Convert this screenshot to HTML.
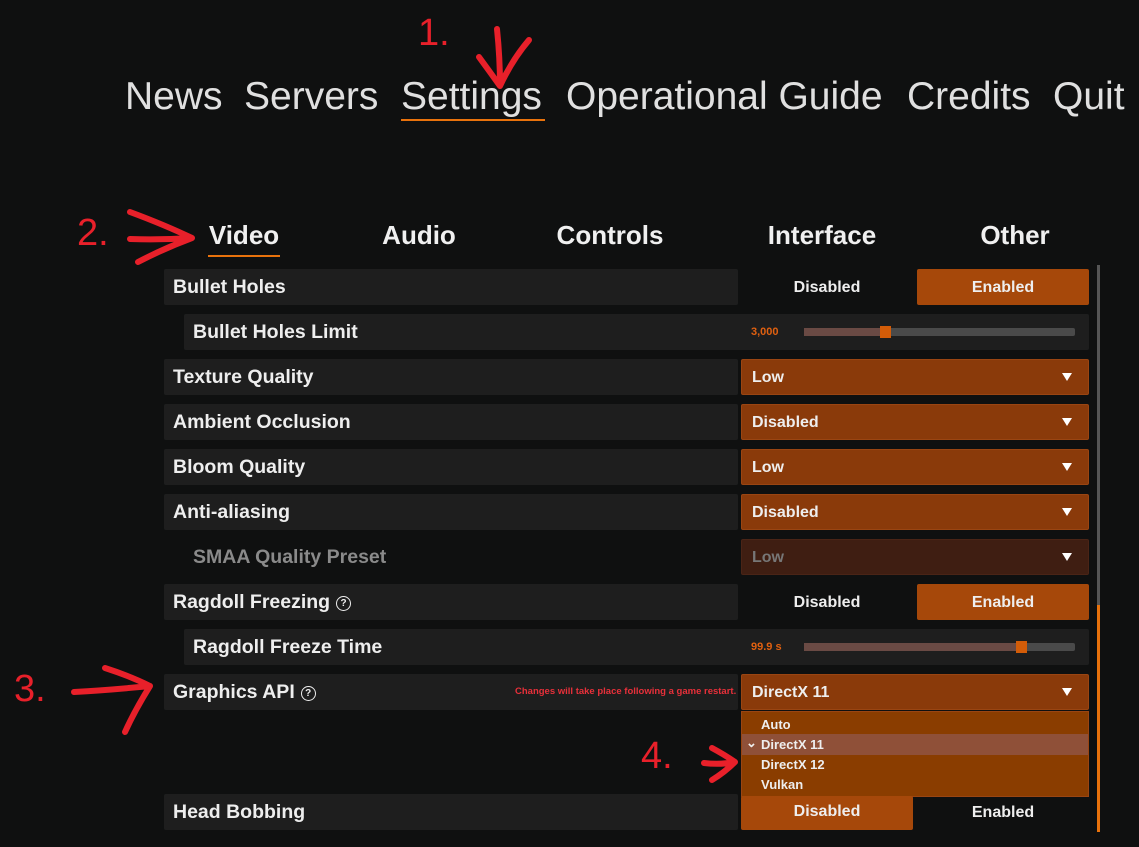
<!DOCTYPE html>
<html><head><meta charset="utf-8"><style>
body{margin:0;width:1139px;height:847px;background:#0f1010;position:relative;overflow:hidden;font-family:"Liberation Sans",sans-serif;}
.a{position:absolute;}
.nav{top:75px;font-size:39px;color:#e0e0e0;}
.tab{top:220px;font-size:26px;font-weight:bold;color:#f0f0f0;transform:translateX(-50%);}
.lb{position:absolute;left:164px;width:574px;height:36px;background:#1e1e1e;border-radius:2px;color:#eee;font-weight:bold;font-size:19.5px;line-height:37px;padding-left:9px;box-sizing:border-box;}
.ind{left:184px;width:905px;padding-left:9px;}
.dd{position:absolute;left:741px;width:348px;height:36px;background:#8a3a0a;border:1px solid #9a4512;box-sizing:border-box;border-radius:2px;color:#eee;font-weight:bold;font-size:16px;line-height:36px;padding-left:10px;}
.dd:after{content:"";position:absolute;right:16px;top:13px;border-left:5px solid transparent;border-right:5px solid transparent;border-top:8px solid #fff;}
.tg{position:absolute;width:172px;height:36px;text-align:center;line-height:37px;font-weight:bold;font-size:16px;color:#eee;}
.on{background:#a6480a;border-radius:2px;}
.q{display:inline-block;width:13px;height:13px;border:1.5px solid #eee;border-radius:50%;font-size:10px;line-height:13px;text-align:center;vertical-align:2px;margin-left:6px;}
.red{color:#e8202a;font-size:38px;}
</style></head><body>
<div class="a nav" style="left:125px">News</div>
<div class="a nav" style="left:244px">Servers</div>
<div class="a nav" style="left:401px">Settings</div>
<div class="a" style="left:401px;top:119px;width:144px;height:2px;background:#e8720c"></div>
<div class="a nav" style="left:566px">Operational Guide</div>
<div class="a nav" style="left:907px">Credits</div>
<div class="a nav" style="left:1053px">Quit</div>

<div class="a tab" style="left:244px">Video</div>
<div class="a" style="left:208px;top:255px;width:72px;height:2px;background:#e8720c"></div>
<div class="a tab" style="left:419px">Audio</div>
<div class="a tab" style="left:610px">Controls</div>
<div class="a tab" style="left:822px">Interface</div>
<div class="a tab" style="left:1015px">Other</div>

<div class="a" style="left:1097px;top:265px;width:3px;height:340px;background:#555"></div>
<div class="a" style="left:1097px;top:605px;width:3px;height:227px;background:#e8720c"></div>

<div class="lb" style="top:269px">Bullet Holes</div>
<div class="tg" style="left:741px;top:269px">Disabled</div>
<div class="tg on" style="left:917px;top:269px">Enabled</div>

<div class="lb ind" style="top:314px">Bullet Holes Limit</div>
<div class="a" style="left:751px;top:326px;font-size:11px;font-weight:bold;color:#e06010">3,000</div>
<div class="a" style="left:804px;top:328px;width:271px;height:8px;background:#4a4a4a;border-radius:2px"></div>
<div class="a" style="left:804px;top:328px;width:80px;height:8px;background:#6a4a44"></div>
<div class="a" style="left:880px;top:326px;width:11px;height:12px;background:#d35c08"></div>

<div class="lb" style="top:359px">Texture Quality</div><div class="dd" style="top:359px">Low</div>
<div class="lb" style="top:404px">Ambient Occlusion</div><div class="dd" style="top:404px">Disabled</div>
<div class="lb" style="top:449px">Bloom Quality</div><div class="dd" style="top:449px">Low</div>
<div class="lb" style="top:494px">Anti-aliasing</div><div class="dd" style="top:494px">Disabled</div>
<div class="lb" style="top:539px;left:184px;background:none;color:#8a8a8a">SMAA Quality Preset</div>
<div class="dd" style="top:539px;background:#3f1e12;border-color:#4a2416;color:#777">Low</div>

<div class="lb" style="top:584px">Ragdoll Freezing<span class="q">?</span></div>
<div class="tg" style="left:741px;top:584px">Disabled</div>
<div class="tg on" style="left:917px;top:584px">Enabled</div>

<div class="lb ind" style="top:629px">Ragdoll Freeze Time</div>
<div class="a" style="left:751px;top:641px;font-size:11px;font-weight:bold;color:#e06010">99.9 s</div>
<div class="a" style="left:804px;top:643px;width:271px;height:8px;background:#4a4a4a;border-radius:2px"></div>
<div class="a" style="left:804px;top:643px;width:214px;height:8px;background:#6a4a44"></div>
<div class="a" style="left:1016px;top:641px;width:11px;height:12px;background:#d35c08"></div>

<div class="lb" style="top:674px">Graphics API<span class="q">?</span></div>
<div class="a" style="left:515px;top:686px;font-size:9.5px;font-weight:bold;color:#e8303a">Changes will take place following a game restart.</div>
<div class="dd" style="top:674px">DirectX 11</div>
<div class="a" style="left:741px;top:711px;width:348px;height:86px;background:#8a3d00;border:1px solid #9a4512;box-sizing:border-box;font-weight:bold;font-size:13px;color:#eee">
<div class="a" style="left:0;top:22px;width:346px;height:21px;background:#8f5038"></div>
<div class="a" style="left:19px;top:5px">Auto</div>
<div class="a" style="left:4px;top:23px">&#8964;</div>
<div class="a" style="left:19px;top:25px">DirectX 11</div>
<div class="a" style="left:19px;top:45px">DirectX 12</div>
<div class="a" style="left:19px;top:65px">Vulkan</div>
</div>

<div class="lb" style="top:794px">Head Bobbing</div>
<div class="tg on" style="left:741px;top:796px;height:34px;line-height:32px">Disabled</div>
<div class="tg" style="left:917px;top:794px">Enabled</div>

<div class="a red" style="left:418px;top:12px">1.</div>
<div class="a red" style="left:77px;top:212px">2.</div>
<div class="a red" style="left:14px;top:668px">3.</div>
<div class="a red" style="left:641px;top:735px">4.</div>
<svg class="a" style="left:0;top:0" width="1139" height="847" fill="none" stroke="#e8202a" stroke-width="6" stroke-linecap="round" stroke-linejoin="round">
<path d="M497 29 Q500 58 500 86 M479 57 Q490 72 500 86 Q512 60 529 40"/>
<path d="M130 239 Q160 240 192 238 M130 212 Q165 225 192 238 Q165 248 138 262"/>
<path d="M74 692 Q110 690 150 686 M105 668 Q130 676 150 686 Q135 710 125 732"/>
<path d="M704 763 Q720 765 735 762 M712 748 Q725 755 735 762 Q725 772 712 780"/>
</svg>
</body></html>
